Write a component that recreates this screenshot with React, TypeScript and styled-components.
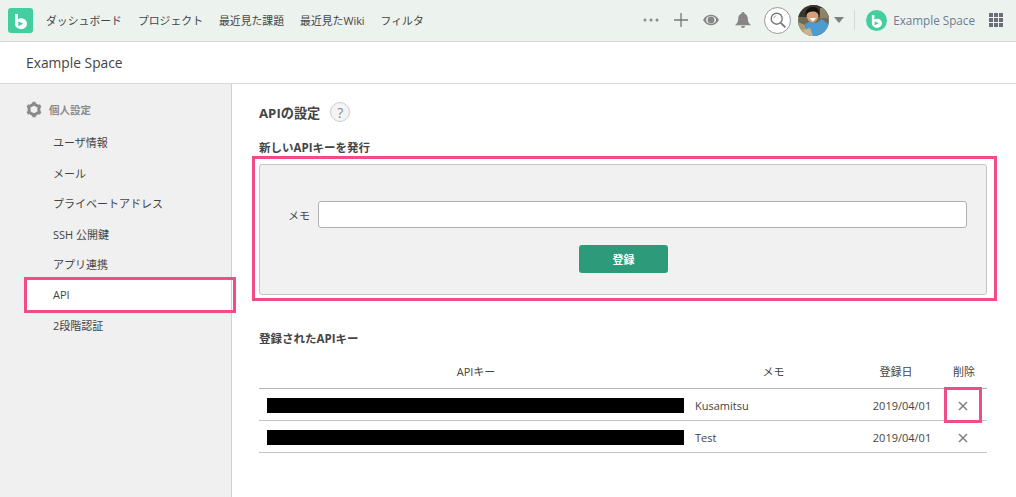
import styled, { createGlobalStyle } from "styled-components";

const GlobalStyle = createGlobalStyle`
  html, body {
    margin: 0;
    padding: 0;
    background: #fff;
    overflow: hidden;
  }
  body {
    font-family: "Open Sans", "Noto Sans CJK JP", sans-serif;
    color: #333;
  }
  * { box-sizing: border-box; }
`;

const navItems = ["ダッシュボード", "プロジェクト", "最近見た課題", "最近見たWiki", "フィルタ"];
const sideItems = ["ユーザ情報", "メール", "プライベートアドレス", "SSH 公開鍵", "アプリ連携", "API", "2段階認証"];

function LogoMark({ size }: { size: number }) {
  return (
    <svg width={size} height={size} viewBox="0 0 25 25">
      <path
        fillRule="evenodd"
        fill="#fff"
        d="M7 6h3v5.200c1-.6 2.100-.9 3.200-.9 3.300 0 5.800 2.500 5.800 5.500 0 3.100-2.500 5.400-5.800 5.400-1.300 0-2.600-.4-3.500-1.100C7.500 19.100 7 17.600 7 15.600zM10.300 13.300v5l4.800-2.500z"
      />
    </svg>
  );
}

function Avatar() {
  return (
    <svg width="31" height="31" viewBox="0 0 31 31">
      <defs>
        <clipPath id="avatar-clip">
          <circle cx="15.500" cy="15.500" r="15.500" />
        </clipPath>
      </defs>
      <g clipPath="url(#avatar-clip)">
        <rect width="31" height="31" fill="#6f6a55" />
        <rect width="31" height="12" fill="#3a362e" />
        <rect x="22" y="3" width="9" height="10" fill="#8b8468" />
        <path d="M0 17l7 3 3 11H0z" fill="#a89c78" />
        <path d="M11 31l-4-12 6-3 5 2 6-4 7 6v6l-3 5z" fill="#4c9bd1" />
        <path d="M5 25l7-2 3 8H7z" fill="#c9b48c" />
        <ellipse cx="14.500" cy="11" rx="5.800" ry="6.500" fill="#d7a07c" />
        <path d="M7.500 11C7 5 10.500 2 15 2c4.500 0 6.500 3 6 8-2-3-3.500-3.500-6.500-3.500-3 0-5.500 1-7 4.500z" fill="#14110e" />
        <path d="M11.500 13h6.500l-3 3.500z" fill="#fff" />
      </g>
    </svg>
  );
}

function GearIcon() {
  return (
    <svg width="16" height="17" viewBox="0 0 16 17">
      <path d="M8 2.900l4.900 2.800v5.600L8 14.100l-4.900-2.800V5.700z" fill="none" stroke="#8a8a8a" strokeWidth="3" strokeLinejoin="round" />
      <path d="M6.400.8h3.200v2.500H6.400zM6.400 13.700h3.200v2.500H6.400z" fill="#8a8a8a" />
      <path d="M6.400.8h3.200v2.500H6.400zM6.400 13.700h3.200v2.500H6.400z" fill="#8a8a8a" transform="rotate(60 8 8.500)" />
      <path d="M6.400.8h3.200v2.500H6.400zM6.400 13.700h3.200v2.500H6.400z" fill="#8a8a8a" transform="rotate(120 8 8.500)" />
    </svg>
  );
}

function DeleteIcon() {
  return (
    <svg width="10" height="10" viewBox="0 0 10 10">
      <path d="M1 1l8 8M9 1l-8 8" stroke="#808080" strokeWidth="1.500" />
    </svg>
  );
}

export default function App() {
  return (
    <Page>
      <GlobalStyle />
      <TopBar>
        <LogoTile>
          <LogoMark size={25} />
        </LogoTile>
        <Nav>
          {navItems.map((item) => (
            <NavLink key={item}>{item}</NavLink>
          ))}
        </Nav>
        <Tools>
          <svg width="16" height="4" viewBox="0 0 16 4">
            <circle cx="2" cy="2" r="1.500" fill="#8b8b8b" />
            <circle cx="8" cy="2" r="1.500" fill="#8b8b8b" />
            <circle cx="14" cy="2" r="1.500" fill="#8b8b8b" />
          </svg>
          <PlusIcon width="14" height="14" viewBox="0 0 14 14">
            <path d="M7 0v14M0 7h14" stroke="#777" strokeWidth="1.300" />
          </PlusIcon>
          <EyeIcon width="16" height="12" viewBox="0 0 16 12">
            <path d="M0 6c2-3.600 5-5.200 8-5.200S14 2.400 16 6c-2 3.600-5 5.200-8 5.200S2 9.600 0 6z" fill="#868686" />
            <ellipse cx="8" cy="6" rx="5" ry="3.900" fill="#ecf2ee" />
            <circle cx="8" cy="6" r="3.400" fill="#868686" />
          </EyeIcon>
          <BellIcon width="16" height="16" viewBox="0 0 16 16">
            <path d="M8 0c1 0 1.500.7 1.500 1.500C12 2.400 12.800 4.500 12.800 7c0 2.800 1 4.200 3.200 6.200H0C2.200 11.200 3.200 9.800 3.200 7c0-2.500.8-4.600 3.300-5.500C6.500.7 7 0 8 0z" fill="#868686" />
            <path d="M6 14h4c0 1.200-1 2-2 2s-2-.8-2-2z" fill="#868686" />
          </BellIcon>
          <SearchButton>
            <svg width="16" height="16" viewBox="0 0 16 16">
              <circle cx="6.700" cy="6.700" r="5.500" stroke="#777" strokeWidth="1.400" fill="none" />
              <path d="M10.800 10.800L15.300 15.300" stroke="#777" strokeWidth="1.800" />
              <path d="M3.800 6.500a3 3 0 0 1 2.700-2.700" stroke="#aaa" strokeWidth="1" fill="none" />
            </svg>
          </SearchButton>
          <AvatarWrap>
            <Avatar />
            <Caret />
          </AvatarWrap>
          <ToolDivider />
          <SpaceSwitch>
            <SpaceBadge>
              <LogoMark size={21} />
            </SpaceBadge>
            <SpaceName>Example Space</SpaceName>
          </SpaceSwitch>
          <AppGrid>
            {Array.from({ length: 9 }).map((_, i) => (
              <i key={i} />
            ))}
          </AppGrid>
        </Tools>
      </TopBar>
      <SpaceBar>Example Space</SpaceBar>
      <Body>
        <Sidebar>
          <SideTitle>
            <GearIcon />
            個人設定
          </SideTitle>
          <SideList>
            {sideItems.map((item) => (
              <SideItem key={item} $active={item === "API"}>
                {item}
                {item === "API" && <SideHighlight />}
              </SideItem>
            ))}
          </SideList>
        </Sidebar>
        <Main>
          <PageTitle>
            APIの設定
            <HelpBadge>?</HelpBadge>
          </PageTitle>
          <SectionTitle>新しいAPIキーを発行</SectionTitle>
          <FormPanel>
            <PanelHighlight />
            <FormRow>
              <FormLabel>メモ</FormLabel>
              <MemoInput type="text" />
            </FormRow>
            <SubmitButton type="button">登録</SubmitButton>
          </FormPanel>
          <KeysTitle>登録されたAPIキー</KeysTitle>
          <KeysTable>
            <thead>
              <tr>
                <HeadCell $width={427} $padLeft={7}>APIキー</HeadCell>
                <HeadCell $width={175}>メモ</HeadCell>
                <HeadCell $width={82} $padRight={12}>登録日</HeadCell>
                <HeadCell $padRight={2}>削除</HeadCell>
              </tr>
            </thead>
            <tbody>
              <tr>
                <BarCell><KeyMask /></BarCell>
                <MemoCell>Kusamitsu</MemoCell>
                <DateCell>2019/04/01</DateCell>
                <DeleteCell>
                  <DeleteHighlight />
                  <DeleteIcon />
                </DeleteCell>
              </tr>
              <tr>
                <BarCell><KeyMask /></BarCell>
                <MemoCell>Test</MemoCell>
                <DateCell>2019/04/01</DateCell>
                <DeleteCell>
                  <DeleteIcon />
                </DeleteCell>
              </tr>
            </tbody>
          </KeysTable>
        </Main>
      </Body>
    </Page>
  );
}

const Page = styled.div`
  width: 1016px;
  height: 497px;
  display: flex;
  flex-direction: column;
  overflow: hidden;
`;

const TopBar = styled.header`
  height: 42px;
  flex: none;
  display: flex;
  align-items: center;
  padding: 0 13px 1px 8px;
  background: #ecf2ee;
  border-bottom: 1px solid #d8d8d8;
`;

const LogoTile = styled.div`
  width: 25px;
  height: 25px;
  border-radius: 3px;
  background: #42ce9f;
  display: flex;
  align-items: center;
  justify-content: center;
`;

const Nav = styled.nav`
  display: flex;
  gap: 16px;
  margin-left: 13px;
`;

const NavLink = styled.a`
  font-size: 10.850px;
  color: #444;
  white-space: nowrap;
`;

const Tools = styled.div`
  margin-left: auto;
  display: flex;
  align-items: center;
`;

const PlusIcon = styled.svg`
  margin-left: 15px;
`;

const EyeIcon = styled.svg`
  margin-left: 15px;
`;

const BellIcon = styled.svg`
  margin-left: 16px;
`;

const SearchButton = styled.div`
  width: 27px;
  height: 27px;
  margin-left: 13px;
  border-radius: 50%;
  border: 1px solid #999;
  background: #fff;
  display: flex;
  align-items: center;
  justify-content: center;
`;

const AvatarWrap = styled.div`
  display: flex;
  align-items: center;
  margin-left: 7px;
`;

const Caret = styled.span`
  width: 0;
  height: 0;
  margin-left: 5px;
  border-left: 5px solid transparent;
  border-right: 5px solid transparent;
  border-top: 6px solid #808080;
`;

const ToolDivider = styled.span`
  width: 1px;
  height: 20px;
  margin-left: 10px;
  background: #d4d8d5;
`;

const SpaceSwitch = styled.div`
  display: flex;
  align-items: center;
  margin-left: 11px;
`;

const SpaceBadge = styled.div`
  width: 21px;
  height: 21px;
  border-radius: 50%;
  background: #42ce9f;
  display: flex;
  align-items: center;
  justify-content: center;
`;

const SpaceName = styled.span`
  margin-left: 6px;
  font-size: 11.700px;
  color: #6f7c93;
  white-space: nowrap;
`;

const AppGrid = styled.div`
  margin-left: 14px;
  width: 14px;
  display: grid;
  grid-template-columns: repeat(3, 4px);
  gap: 1px;

  i {
    display: block;
    height: 4px;
    background: #6c6c78;
  }
`;

const SpaceBar = styled.div`
  height: 42px;
  flex: none;
  display: flex;
  align-items: center;
  padding-left: 26px;
  font-size: 13.800px;
  color: #444;
  background: #fff;
  border-bottom: 1px solid #d8d8d8;
`;

const Body = styled.div`
  flex: 1;
  display: flex;
  min-height: 0;
`;

const Sidebar = styled.aside`
  width: 232px;
  flex: none;
  padding: 15px 0 0 24px;
  background: #f0f0f0;
  border-right: 1px solid #cfcfcf;
`;

const SideTitle = styled.div`
  display: flex;
  align-items: center;
  gap: 7px;
  height: 20px;
  margin-left: 2px;
  font-size: 10.500px;
  font-weight: 600;
  color: #8c8c8c;
`;

const SideList = styled.ul`
  list-style: none;
  margin: 7.800px 0 0;
  padding: 0;
`;

const SideItem = styled.li<{ $active?: boolean }>`
  position: relative;
  height: 30.500px;
  display: flex;
  align-items: center;
  padding-left: 29px;
  font-size: 11px;
  color: #444;
  background: ${(p) => (p.$active ? "#fff" : "transparent")};
`;

const SideHighlight = styled.span`
  position: absolute;
  left: 0;
  right: -5px;
  top: -2px;
  bottom: -3px;
  border: 3px solid #f04c87;
`;

const Main = styled.main`
  flex: 1;
  padding: 17px 29px 0 27px;
  min-width: 0;
`;

const PageTitle = styled.h1`
  margin: 0;
  height: 22px;
  display: flex;
  align-items: center;
  gap: 10px;
  font-size: 13.200px;
  font-weight: 700;
  color: #444;
`;

const HelpBadge = styled.span`
  width: 20px;
  height: 20px;
  border-radius: 50%;
  border: 1px solid #ccc;
  background: #f4f4f4;
  display: flex;
  align-items: center;
  justify-content: center;
  font-size: 14px;
  font-weight: 400;
  color: #888;
`;

const SectionTitle = styled.h2`
  margin: 16px 0 0;
  height: 16px;
  display: flex;
  align-items: center;
  font-size: 11.500px;
  font-weight: 700;
  color: #444;
`;

const FormPanel = styled.section`
  position: relative;
  height: 131px;
  margin-top: 9px;
  padding: 36px 19px 0 0;
  display: flex;
  flex-direction: column;
  background: #f1f1f1;
  border: 1px solid #c4c4c4;
  border-radius: 3px;
`;

const PanelHighlight = styled.span`
  position: absolute;
  left: -8px;
  right: -11px;
  top: -9px;
  bottom: -7px;
  border: 3px solid #f04c87;
`;

const FormRow = styled.div`
  display: flex;
  align-items: center;
  justify-content: flex-end;
  gap: 8px;
`;

const FormLabel = styled.label`
  font-size: 11px;
  color: #444;
`;

const MemoInput = styled.input`
  width: 649px;
  height: 27px;
  border: 1px solid #b0b0b0;
  border-radius: 3px;
  background: #fff;
`;

const SubmitButton = styled.button`
  align-self: flex-start;
  width: 89px;
  height: 28px;
  margin: 17px 0 0 319px;
  border: 0;
  border-radius: 3px;
  background: #2d9a79;
  color: #fff;
  font-family: inherit;
  font-size: 11px;
  font-weight: 700;
`;

const KeysTitle = styled.h2`
  margin: 35px 0 0;
  height: 16px;
  display: flex;
  align-items: center;
  font-size: 11.500px;
  font-weight: 700;
  color: #444;
`;

const KeysTable = styled.table`
  width: 728px;
  margin-top: 8px;
  border-collapse: collapse;
  table-layout: fixed;
  font-size: 11px;
  color: #444;
`;

const HeadCell = styled.th<{ $width?: number; $padLeft?: number; $padRight?: number }>`
  width: ${(p) => (p.$width ? `${p.$width}px` : "auto")};
  height: 34px;
  padding: 0 ${(p) => p.$padRight ?? 0}px 0 ${(p) => p.$padLeft ?? 0}px;
  font-weight: 400;
  border-bottom: 1px solid #b4b4b4;
`;

const BarCell = styled.td`
  height: 32px;
  padding: 2px 0 0 8px;
  border-bottom: 1px solid #c4c4c4;
`;

const KeyMask = styled.div`
  width: 417px;
  height: 15px;
  background: #000;
`;

const MemoCell = styled.td`
  padding: 2px 0 0 9px;
  border-bottom: 1px solid #c4c4c4;
`;

const DateCell = styled.td`
  padding: 2px 0 0;
  text-align: center;
  border-bottom: 1px solid #c4c4c4;
`;

const DeleteCell = styled.td`
  position: relative;
  padding: 5px 4px 0 0;
  text-align: center;
  border-bottom: 1px solid #c4c4c4;
`;

const DeleteHighlight = styled.span`
  position: absolute;
  left: 1px;
  right: 5px;
  top: -2px;
  bottom: -3px;
  border: 3px solid #f04c87;
`;
